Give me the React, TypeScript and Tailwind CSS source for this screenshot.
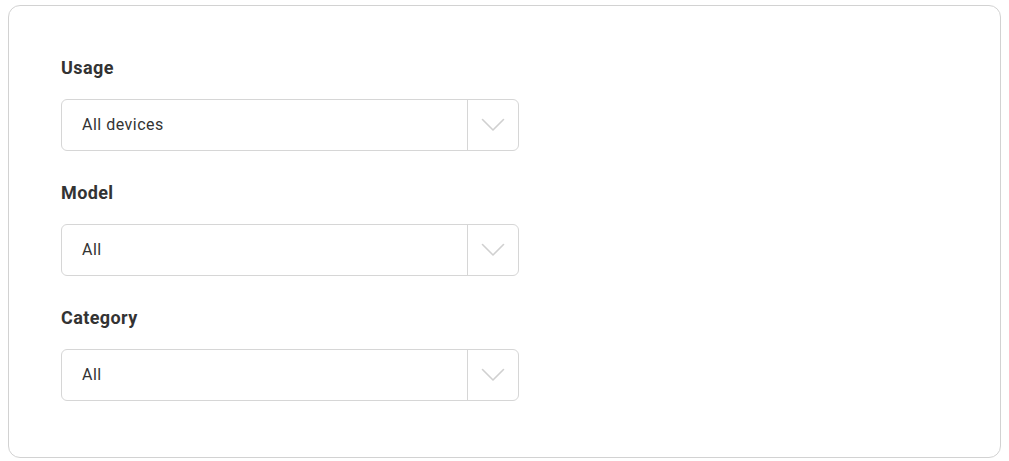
import React from "react";

function Chevron() {
  return (
    <svg width="24" height="14" viewBox="0 0 24 14" fill="none">
      <path d="M1.5 1.5 L12 12 L22.5 1.5" stroke="#d0d0d0" strokeWidth="1.6" strokeLinecap="round" strokeLinejoin="round" />
    </svg>
  );
}

function Field({ label, value }: { label: string; value: string }) {
  return (
    <div className="flex flex-col">
      <div className="h-5 leading-5 text-[18px] tracking-[0.4px] font-bold text-[#333333] mb-[21px]">{label}</div>
      <div className="flex h-[52px] w-[458px] rounded-[6px] border border-[#d6d6d6] bg-white">
        <div className="flex flex-1 items-center pl-[20px] text-[16px] tracking-[0.5px] text-[#333333]">{value}</div>
        <div className="flex w-[51px] items-center justify-center border-l border-[#d6d6d6]">
          <Chevron />
        </div>
      </div>
    </div>
  );
}

export default function App() {
  return (
    <div className="w-[1009px] h-[461px] bg-white pt-[5px] pl-[8px]" style={{ fontFamily: "Roboto, 'Liberation Sans', sans-serif" }}>
      <div className="w-[993px] h-[453px] rounded-[12px] border border-[#d2d2d2] pl-[52px] pt-[52px] flex flex-col gap-[32px]">
        <Field label="Usage" value="All devices" />
        <Field label="Model" value="All" />
        <Field label="Category" value="All" />
      </div>
    </div>
  );
}
